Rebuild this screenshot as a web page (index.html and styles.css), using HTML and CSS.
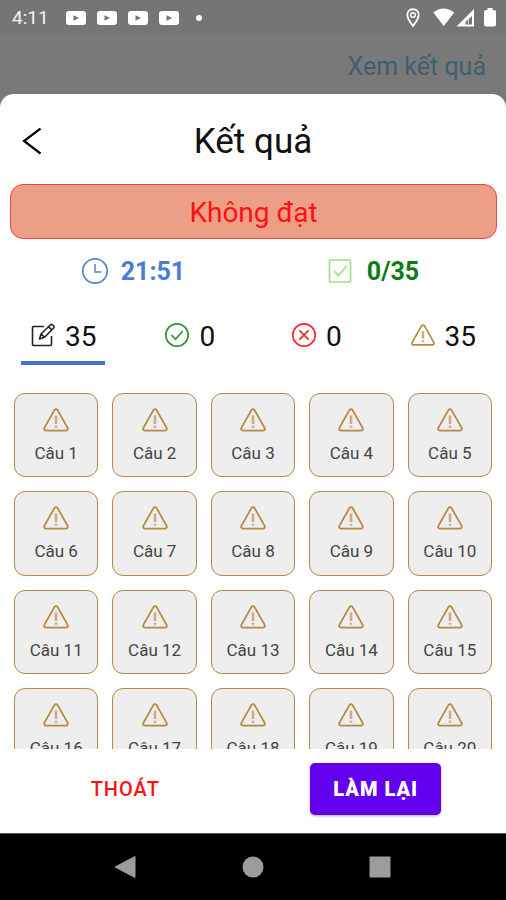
FILE: index.html
```html
<!DOCTYPE html>
<html lang="vi">
<head>
<meta charset="utf-8">
<meta name="viewport" content="width=device-width, initial-scale=1">
<title>Kết quả</title>
<link rel="stylesheet" href="styles.css">
</head>
<body>
<svg class="sprite" aria-hidden="true">
  <symbol id="warning" viewBox="0 0 26 24">
    <path d="M11.4 2.1 1.5 19.6q-1.2 2.7 1.5 3h20q2.7-.3 1.5-3L14.600 2.100q-1.600-1.800-3.200 0Z" fill="none" stroke="#b5893f" stroke-width="1.800" stroke-linejoin="round"/>
    <path d="M13 7.500v8.500M13 17.700v2" fill="none" stroke="#cfa98a" stroke-width="2.600"/>
  </symbol>
  <symbol id="video" viewBox="0 0 22 16">
    <rect x="1" y="1" width="20" height="14" rx="3" fill="#fff"/>
    <path d="m8.500 5.200 5.500 2.800-5.500 2.800Z" fill="#757575"/>
  </symbol>
</svg>

<div class="screen">
  <div class="status">
    <span class="time">4:11</span>
    <svg class="video"><use href="#video"/></svg>
    <svg class="video"><use href="#video"/></svg>
    <svg class="video"><use href="#video"/></svg>
    <svg class="video"><use href="#video"/></svg>
    <span class="dot"></span>
    <svg class="pin" viewBox="0 0 14 20"><path d="M7 1.300c-3.400 0-5.700 2.400-5.700 5.500C1.300 10.800 7 18 7 18s5.700-7.200 5.700-11.200c0-3.100-2.300-5.500-5.700-5.500Z" fill="none" stroke="#fff" stroke-width="1.900"/><circle cx="7" cy="7" r="2.300" fill="none" stroke="#fff" stroke-width="1.400"/></svg>
    <svg class="signal" viewBox="0 0 42 20"><path d="M.300 4.500Q10.500-3.500 21.200 4.500L10.800 18Z" fill="#fff"/><path fill-rule="evenodd" d="M41 1v17.500H23.500ZM39 8v8.500h-6.500V14Z" fill="#fff"/><path d="M35.300 10.500v6" stroke="#ddd"/></svg>
    <svg class="battery" viewBox="0 0 12 20"><path d="M3.500 0h5v2H10q2 0 2 2v12.500q0 2-2 2H2q-2 0-2-2V4q0-2 2-2h1.500Z" fill="#fff"/></svg>
  </div>

  <header class="toolbar"><a href="#sheet">Xem kết quả</a></header>

  <main class="sheet" id="sheet">
    <div class="heading">
      <button class="back" type="button" aria-label="Quay lại"><svg viewBox="0 0 20 28"><path d="M18.500 .500 2 13l16.500 12.500" fill="none" stroke="#000" stroke-width="2.200"/></svg></button>
      <h1>Kết quả</h1>
    </div>
    <p class="banner">Không đạt</p>

    <div class="stats">
      <div class="stat elapsed">
        <svg viewBox="0 0 28 28"><circle cx="14" cy="13" r="12.200" fill="none" stroke="#5584d4" stroke-width="1.700"/><path d="M14 6v8h6.500" fill="none" stroke="#5584d4" stroke-width="1.500"/></svg>
        <span>21:51</span>
      </div>
      <div class="stat score">
        <svg viewBox="0 0 28 28"><rect x="2.500" y="2" width="21" height="22" rx="1" fill="none" stroke="#9be287" stroke-width="1.700"/><path d="m7 13 4.500 4.500L19.500 8" fill="none" stroke="#9be287" stroke-width="1.700"/></svg>
        <span>0/35</span>
      </div>
    </div>

    <nav class="tabs">
      <button class="tab active" type="button">
        <svg viewBox="0 0 26 26"><g fill="none" stroke="#222" stroke-width="1.600" stroke-linejoin="round"><path d="M14 3.500H3.500q-1 0-1 1v17q0 1 1 1h17q1 0 1-1V13"/><path d="m9.500 16 1.500-5L20.500 1.800q1-.800 2 0l1.200 1.200q.800 1 0 2L14.500 14.200Zm1.500-5 3.500 3.200M18.500 3.700 21.800 6.900"/></g></svg>
        <span>35</span>
      </button>
      <button class="tab" type="button">
        <svg viewBox="0 0 26 26"><g fill="none" stroke="#2c9638" stroke-width="1.700"><circle cx="13" cy="12" r="11.200"/><path d="m7.500 12 4 4.300L18.800 8"/></g></svg>
        <span>0</span>
      </button>
      <button class="tab" type="button">
        <svg viewBox="0 0 26 26"><g fill="none" stroke="#f42b2b" stroke-width="1.700"><circle cx="13" cy="12" r="11.200"/><path d="m8.300 7.300 9.400 9.400m0-9.400-9.400 9.400"/></g></svg>
        <span>0</span>
      </button>
      <button class="tab" type="button">
        <svg viewBox="0 0 28 28"><use href="#warning" x="1" y="1" width="26" height="24"/></svg>
        <span>35</span>
      </button>
    </nav>

    <div class="questions">
      <button type="button"><svg><use href="#warning"/></svg>Câu 1</button>
      <button type="button"><svg><use href="#warning"/></svg>Câu 2</button>
      <button type="button"><svg><use href="#warning"/></svg>Câu 3</button>
      <button type="button"><svg><use href="#warning"/></svg>Câu 4</button>
      <button type="button"><svg><use href="#warning"/></svg>Câu 5</button>
      <button type="button"><svg><use href="#warning"/></svg>Câu 6</button>
      <button type="button"><svg><use href="#warning"/></svg>Câu 7</button>
      <button type="button"><svg><use href="#warning"/></svg>Câu 8</button>
      <button type="button"><svg><use href="#warning"/></svg>Câu 9</button>
      <button type="button"><svg><use href="#warning"/></svg>Câu 10</button>
      <button type="button"><svg><use href="#warning"/></svg>Câu 11</button>
      <button type="button"><svg><use href="#warning"/></svg>Câu 12</button>
      <button type="button"><svg><use href="#warning"/></svg>Câu 13</button>
      <button type="button"><svg><use href="#warning"/></svg>Câu 14</button>
      <button type="button"><svg><use href="#warning"/></svg>Câu 15</button>
      <button type="button"><svg><use href="#warning"/></svg>Câu 16</button>
      <button type="button"><svg><use href="#warning"/></svg>Câu 17</button>
      <button type="button"><svg><use href="#warning"/></svg>Câu 18</button>
      <button type="button"><svg><use href="#warning"/></svg>Câu 19</button>
      <button type="button"><svg><use href="#warning"/></svg>Câu 20</button>
    </div>

    <div class="actions">
      <button class="exit" type="button">THOÁT</button>
      <button class="retry" type="button">LÀM LẠI</button>
    </div>
  </main>

  <div class="navbar">
    <svg viewBox="0 0 24 24"><path d="M21 1.500v21L1 12Z" fill="#9c9c9c" stroke="#9c9c9c" stroke-linejoin="round"/></svg>
    <svg viewBox="0 0 24 24"><circle cx="12" cy="12" r="10.500" fill="#9c9c9c"/></svg>
    <svg viewBox="0 0 24 24"><rect x="1.500" y="1.500" width="21" height="21" rx="1" fill="#9c9c9c"/></svg>
  </div>
</div>
</body>
</html>
```
FILE: styles.css
```css
* {
  box-sizing: border-box;
}

body {
  margin: 0;
  font-family: Roboto, "Liberation Sans", sans-serif;
  color: #111;
}

button {
  margin: 0;
  padding: 0;
  border: 0;
  background: none;
  color: inherit;
  font: inherit;
}

svg {
  display: block;
  flex: none;
}

.sprite {
  position: absolute;
  width: 0;
  height: 0;
}

.screen {
  display: flex;
  flex-direction: column;
  height: 100vh;
  background: #797979;
}

.status {
  display: flex;
  align-items: center;
  flex: none;
  height: 35px;
  padding: 0 10px 0 12px;
  background: #757575;
}

.time {
  margin-right: 16px;
  color: #f2f2f2;
  font-size: 19px;
}

.video {
  width: 22px;
  height: 16px;
  margin-right: 9px;
}

.dot {
  width: 6px;
  height: 6px;
  margin: 0 auto 0 7px;
  border-radius: 50%;
  background: #fff;
}

.pin {
  width: 14px;
  height: 20px;
  margin-right: 13px;
}

.signal {
  width: 42px;
  height: 20px;
  margin-right: 9px;
}

.battery {
  width: 12px;
  height: 20px;
}

.toolbar {
  flex: none;
  height: 59px;
  padding: 16px 20px 0;
  text-align: right;
  font-size: 25px;
  line-height: 32px;
}

.toolbar a {
  color: #425d6e;
  text-decoration: none;
}

.sheet {
  display: flex;
  flex-direction: column;
  flex: 1;
  min-height: 0;
  border-radius: 14px 14px 0 0;
  background: #fff;
}

.heading {
  display: grid;
  grid-template-columns: 64px 1fr 64px;
  align-items: center;
  flex: none;
  height: 90px;
  padding-top: 6px;
}

.back {
  justify-self: center;
}

.back svg {
  width: 20px;
  height: 28px;
}

.heading h1 {
  margin: 0;
  font-size: 35px;
  font-weight: 400;
  line-height: 48px;
  text-align: center;
}

.banner {
  flex: none;
  margin: 0 9px 0 10px;
  padding: 12px 10px 9px;
  border: 1px solid #f0443e;
  border-radius: 13px;
  background: #ed9e87;
  color: #f11;
  font-size: 28px;
  line-height: 32px;
  text-align: center;
}

.stats {
  display: grid;
  grid-template-columns: 1fr 1fr;
  flex: none;
  padding: 16px 13px;
}

.stat {
  display: flex;
  align-items: center;
  justify-content: center;
  gap: 12px;
  font-size: 25px;
  font-weight: 700;
  line-height: 34px;
}

.stat svg {
  width: 28px;
  height: 28px;
}

.elapsed {
  color: #4a7dd2;
}

.score {
  color: #0a7d14;
}

.tabs {
  display: grid;
  grid-template-columns: repeat(4, 1fr);
  justify-items: center;
  flex: none;
  padding: 8px 0 14px;
}

.tab {
  display: flex;
  align-items: center;
  justify-content: center;
  gap: 9px;
  width: 84px;
  height: 52px;
  padding-bottom: 2px;
  border-bottom: 4px solid transparent;
  font-size: 28px;
}

.tab.active {
  border-color: #3e74cd;
}

.tab svg {
  width: 26px;
  height: 26px;
}

.questions {
  display: grid;
  grid-template-columns: repeat(5, 1fr);
  align-content: start;
  gap: 14px;
  flex: 1;
  min-height: 0;
  margin-bottom: 14px;
  padding: 14px 14px 0;
  overflow: hidden;
}

.questions button {
  display: flex;
  flex-direction: column;
  align-items: center;
  gap: 9px;
  aspect-ratio: 1;
  padding-top: 14px;
  border: 1px solid #b18a4c;
  border-radius: 11px;
  background: #eee;
  color: #444;
  font-size: 17px;
  line-height: 24px;
}

.questions svg {
  width: 26px;
  height: 24px;
}

.actions {
  display: grid;
  grid-template-columns: 1fr 1fr;
  place-items: center;
  flex: none;
  padding: 0 5px 18px 0;
}

.actions button {
  height: 52px;
  padding: 0 23px;
  border-radius: 5px;
  font-size: 20px;
  letter-spacing: 1px;
}

.actions .exit {
  color: #f11;
  font-weight: 500;
}

.actions .retry {
  background: #6200ee;
  box-shadow: 0 1px 3px #0005;
  color: #fff;
  font-weight: 900;
}

.navbar {
  display: flex;
  align-items: center;
  justify-content: center;
  gap: 103px;
  flex: none;
  height: 67px;
  border-top: 1px solid #555;
  background: #000;
}

.navbar svg {
  width: 24px;
  height: 24px;
}
```
